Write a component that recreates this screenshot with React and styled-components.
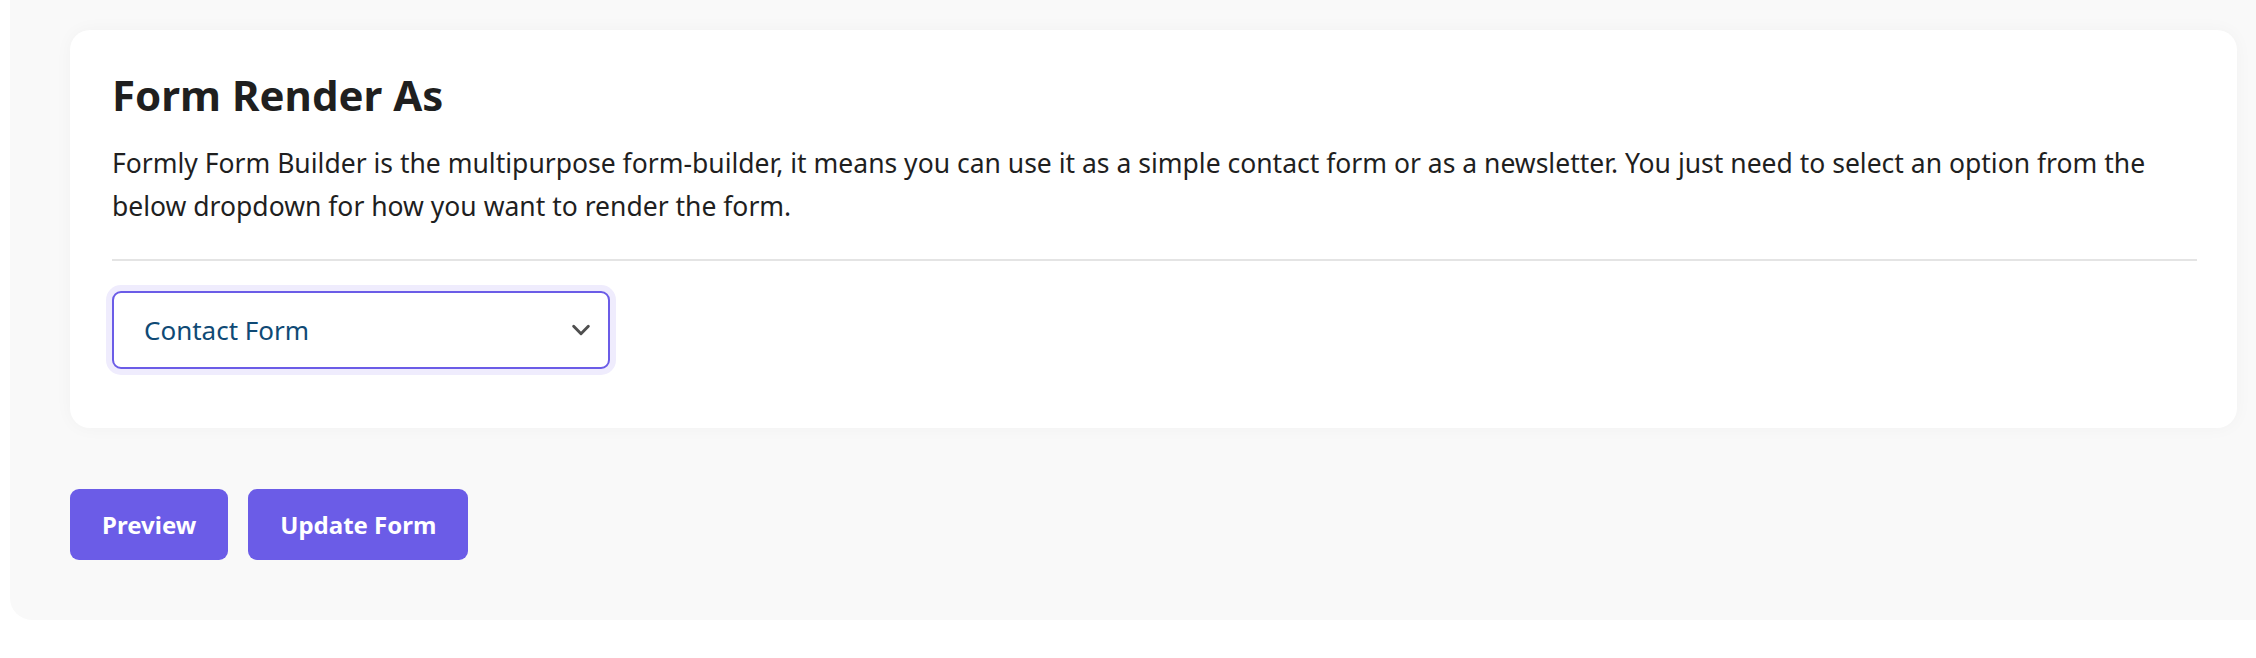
import React from 'react';
import styled, { createGlobalStyle } from 'styled-components';

const GlobalStyle = createGlobalStyle`
  html, body {
    margin: 0;
    padding: 0;
    background: #ffffff;
  }
  body {
    font-family: "Noto Sans", "Open Sans", sans-serif;
    color: #1f1f1f;
  }
`;

const Panel = styled.div`
  margin-left: 10px;
  padding: 30px 19px 60px 60px;
  background-color: #f9f9f9;
  border-radius: 0 0 0 22px;
`;

const Card = styled.section`
  padding: 37px 40px 59px 42px;
  border-radius: 20px;
  background-color: #ffffff;
  box-shadow: 0 0 18px rgba(0, 0, 0, 0.035);
`;

const CardTitle = styled.h2`
  margin: 0 0 19px;
  font-size: 42px;
  line-height: 56px;
  font-weight: 700;
  color: #1f1f1f;
`;

const CardText = styled.p`
  margin: 0;
  font-size: 26.5px;
  line-height: 43px;
  color: #1f1f1f;
`;

const Divider = styled.hr`
  margin: 31px 0 30px;
  border: 0;
  border-top: 2px solid #e4e4e4;
`;

const SelectWrap = styled.div`
  display: flex;
  align-items: center;
  justify-content: space-between;
  box-sizing: border-box;
  width: 498px;
  height: 78px;
  padding: 0 16px 0 30px;
  border: 2px solid #6b5ce7;
  border-radius: 9px;
  box-shadow: 0 0 0 6px #efecfd;
  background: #ffffff;
  color: #0f4a75;
  font-size: 26px;
  cursor: pointer;
`;

const Chevron = styled.svg`
  width: 22px;
  height: 22px;
  color: #4f4f4f;
`;

const Actions = styled.div`
  display: flex;
  gap: 20px;
  margin-top: 61px;
`;

const Button = styled.button`
  height: 71px;
  padding: 0 32px;
  border: 0;
  border-radius: 9px;
  background-color: #6b5ce7;
  color: #ffffff;
  font-family: inherit;
  font-size: 24px;
  font-weight: 700;
  cursor: pointer;
`;

const App = () => {
  return (
    <>
      <GlobalStyle />
      <Panel>
        <Card>
          <CardTitle>Form Render As</CardTitle>
          <CardText>
            Formly Form Builder is the multipurpose form-builder, it means you can use it as a simple contact form or as a newsletter. You just need to select an option from the below dropdown for how you want to render the form.
          </CardText>
          <Divider />
          <SelectWrap>
            <span>Contact Form</span>
            <Chevron viewBox="0 0 24 24" fill="none" stroke="currentColor" strokeWidth="3.2" strokeLinecap="round" strokeLinejoin="round">
              <path d="M4 8l8 8 8-8" />
            </Chevron>
          </SelectWrap>
        </Card>
        <Actions>
          <Button>Preview</Button>
          <Button>Update Form</Button>
        </Actions>
      </Panel>
    </>
  );
};

export default App;
